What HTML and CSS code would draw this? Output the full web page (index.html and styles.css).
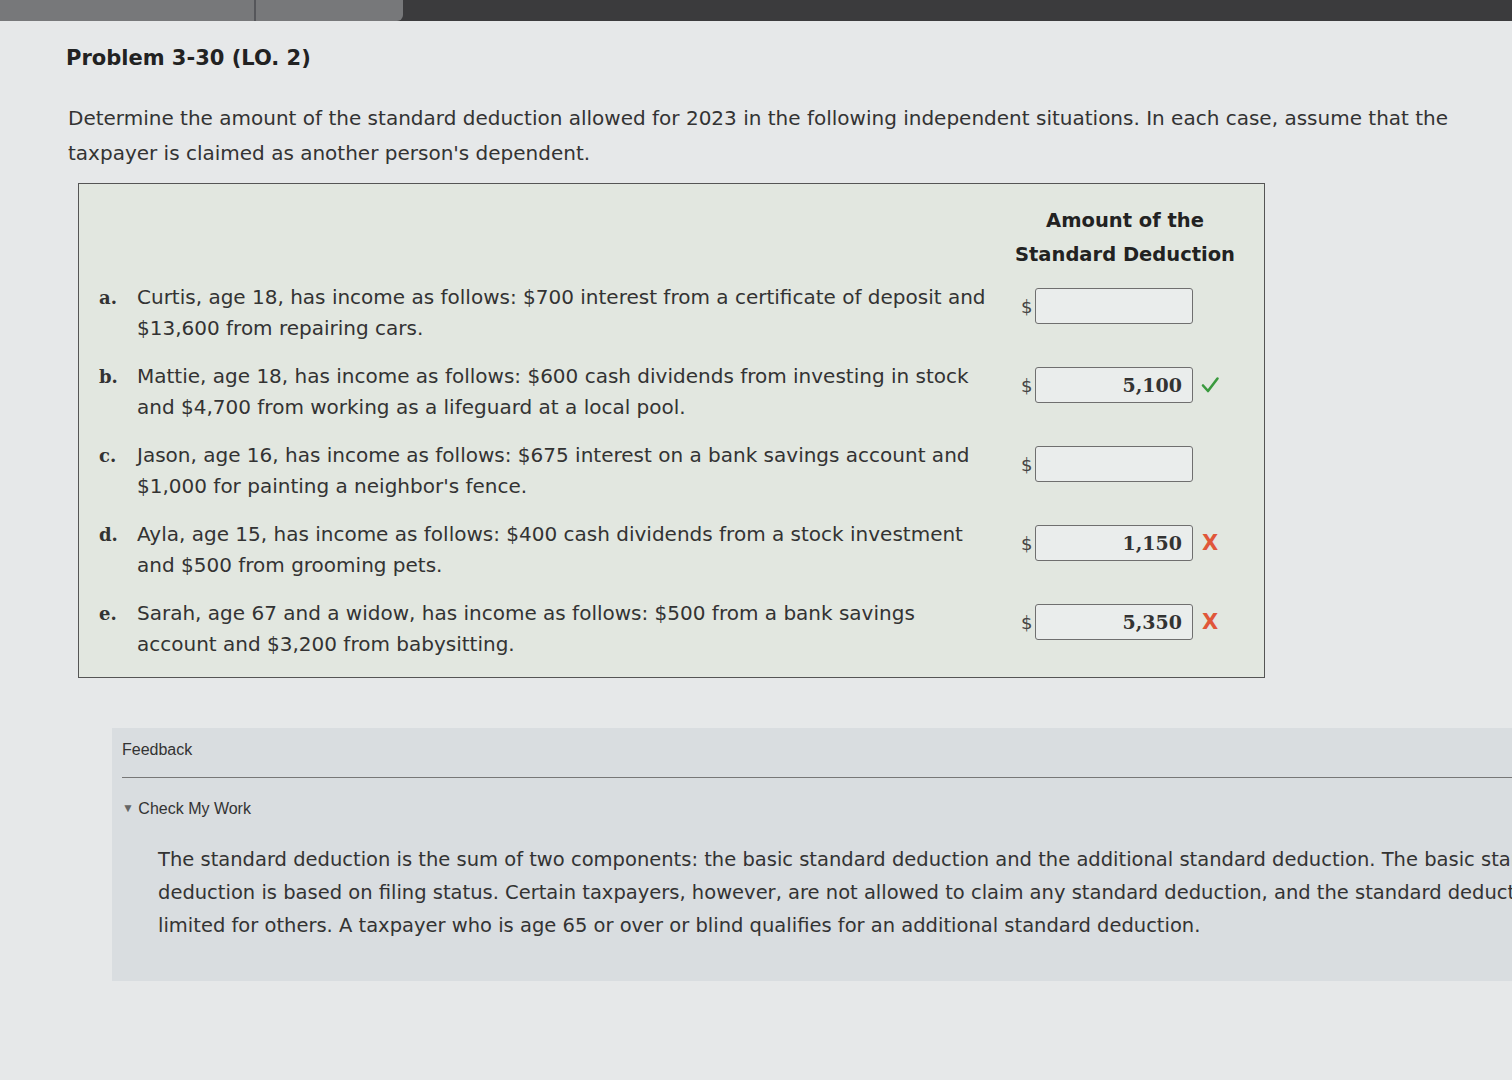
FILE: index.html
```html
<!DOCTYPE html>
<html>
<head>
<meta charset="utf-8">
<link rel="stylesheet" href="styles.css">
</head>
<body>
<div class="topbar">
  <div class="tabs"><div class="tab"></div><div class="tab"></div></div>
</div>
<div class="page">
  <h1 class="title">Problem 3-30 (LO. 2)</h1>
  <p class="intro">Determine the amount of the standard deduction allowed for 2023 in the following independent situations. In each case, assume that the taxpayer is claimed as another person's dependent.</p>

  <div class="problem">
    <div class="head">
      <div class="amt-head">Amount of the<br>Standard Deduction</div>
    </div>

    <div class="row">
      <span class="letter">a.</span>
      <div class="desc">Curtis, age 18, has income as follows: $700 interest from a certificate of deposit and $13,600 from repairing cars.</div>
      <div class="answer"><span class="dollar">$</span><span class="input"></span><span class="mark"></span></div>
    </div>

    <div class="row">
      <span class="letter">b.</span>
      <div class="desc">Mattie, age 18, has income as follows: $600 cash dividends from investing in stock and $4,700 from working as a lifeguard at a local pool.</div>
      <div class="answer"><span class="dollar">$</span><span class="input">5,100</span><span class="mark"><svg class="check" viewBox="0 0 20 20" width="20" height="20"><path d="M3 10.5 L8 16 L17.5 3.5" fill="none" stroke="#3a9a3e" stroke-width="2.6" stroke-linecap="round" stroke-linejoin="round"/></svg></span></div>
    </div>

    <div class="row">
      <span class="letter">c.</span>
      <div class="desc">Jason, age 16, has income as follows: $675 interest on a bank savings account and $1,000 for painting a neighbor's fence.</div>
      <div class="answer"><span class="dollar">$</span><span class="input"></span><span class="mark"></span></div>
    </div>

    <div class="row">
      <span class="letter">d.</span>
      <div class="desc">Ayla, age 15, has income as follows: $400 cash dividends from a stock investment and $500 from grooming pets.</div>
      <div class="answer"><span class="dollar">$</span><span class="input">1,150</span><span class="mark bad">X</span></div>
    </div>

    <div class="row">
      <span class="letter">e.</span>
      <div class="desc">Sarah, age 67 and a widow, has income as follows: $500 from a bank savings account and $3,200 from babysitting.</div>
      <div class="answer"><span class="dollar">$</span><span class="input">5,350</span><span class="mark bad">X</span></div>
    </div>
  </div>

  <div class="feedback">
    <div class="fb-title">Feedback</div>
    <div class="fb-toggle"><span class="tri">&#9660;</span> Check My Work</div>
    <p class="fb-text">The standard deduction is the sum of two components: the basic standard deduction and the additional standard deduction. The basic standard deduction is based on filing status. Certain taxpayers, however, are not allowed to claim any standard deduction, and the standard deduction is limited for others. A taxpayer who is age 65 or over or blind qualifies for an additional standard deduction.</p>
  </div>
</div>
</body>
</html>
```

FILE: styles.css
```css
html, body {
  margin: 0;
  padding: 0;
  width: 1512px;
  height: 1080px;
  overflow: hidden;
}

body {
  background: #e6e8e9;
  font-family: "DejaVu Sans", Verdana, sans-serif;
  color: #2b2b2b;
}

.topbar {
  height: 21px;
  background: #3b3b3d;
}

.tabs {
  display: flex;
  width: 403px;
  height: 21px;
  background: #77787a;
  border-bottom-right-radius: 6px;
}

.tab {
  width: 254px;
  height: 21px;
  border-right: 2px solid #55565a;
}

.tab + .tab {
  width: 147px;
  border-right: none;
}

.page {
  padding-left: 66px;
}

.title {
  margin: 0;
  padding-top: 24px;
  font-size: 21px;
  font-weight: bold;
  line-height: 26px;
  color: #222;
}

.intro {
  margin: 30px 0 0 2px;
  width: 1420px;
  font-size: 20px;
  line-height: 35px;
  color: #333;
}

.problem {
  margin: 12px 0 0 12px;
  width: 1187px;
  box-sizing: border-box;
  border: 1px solid #555;
  background: #e2e7e0;
  padding: 20px 0 17px 20px;
}

.head {
  display: flex;
  justify-content: flex-end;
  margin-bottom: 10px;
}

.amt-head {
  width: 270px;
  margin-right: 4px;
  text-align: center;
  font-weight: bold;
  font-size: 19.5px;
  line-height: 34px;
  color: #222;
}

.row {
  display: grid;
  grid-template-columns: 38px 862px 1fr;
  align-items: start;
  margin-bottom: 17px;
}

.row:last-child {
  margin-bottom: 0;
}

.letter {
  font-family: "DejaVu Serif", Georgia, serif;
  font-weight: bold;
  font-size: 18px;
  line-height: 31px;
  color: #333;
}

.desc {
  font-size: 20px;
  line-height: 31px;
  color: #333;
}

.answer {
  display: flex;
  align-items: center;
  margin-top: 6px;
  padding-left: 22px;
}

.dollar {
  font-size: 18px;
  color: #444;
  width: 14px;
}

.input {
  width: 158px;
  height: 36px;
  box-sizing: border-box;
  border: 1px solid #6f6f6f;
  border-radius: 3px;
  background: #eaedec;
  text-align: right;
  padding-right: 10px;
  font-family: "DejaVu Serif", Georgia, serif;
  font-weight: bold;
  font-size: 19px;
  line-height: 34px;
  color: #333;
}

.mark {
  display: flex;
  justify-content: center;
  align-items: center;
  width: 34px;
  font-size: 21px;
  font-weight: bold;
}

.check {
  display: block;
}

.bad {
  color: #e0573a;
  font-family: "DejaVu Sans", sans-serif;
}

.feedback {
  margin: 50px 0 0 46px;
  width: 1460px;
  height: 253px;
  box-sizing: border-box;
  background: #d9dde0;
  padding: 12px 0 0 10px;
}

.fb-title {
  font-family: "Liberation Sans", Arial, sans-serif;
  font-size: 16px;
  line-height: 20px;
  color: #333;
  padding-bottom: 17px;
  border-bottom: 1px solid #777;
}

.fb-toggle {
  margin-top: 20px;
  font-family: "Liberation Sans", Arial, sans-serif;
  font-size: 16px;
  line-height: 20px;
  color: #333;
}

.tri {
  font-size: 12px;
  color: #666;
  vertical-align: 2px;
}

.fb-text {
  margin: 24px 0 0 36px;
  width: 1420px;
  font-size: 19.5px;
  line-height: 33px;
  color: #333;
}
```
